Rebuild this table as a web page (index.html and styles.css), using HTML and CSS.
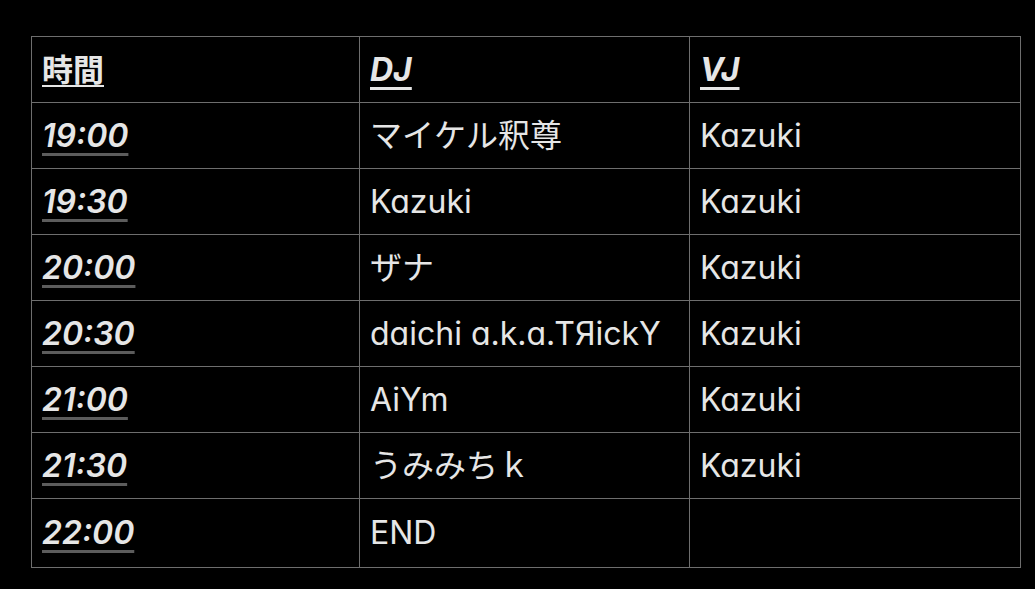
FILE: index.html
```html
<!DOCTYPE html>
<html lang="ja">
<head>
<meta charset="utf-8">
<link rel="stylesheet" href="styles.css">
</head>
<body>
<table class="schedule">
  <colgroup>
    <col class="c1"><col class="c2"><col class="c3">
  </colgroup>
  <thead>
    <tr><th><span class="h-time">時間</span></th><th><span class="h-it">DJ</span></th><th><span class="h-it">VJ</span></th></tr>
  </thead>
  <tbody>
    <tr><td><span class="time">19:00</span></td><td>マイケル釈尊</td><td>Kazuki</td></tr>
    <tr><td><span class="time">19:30</span></td><td>Kazuki</td><td>Kazuki</td></tr>
    <tr><td><span class="time">20:00</span></td><td>ザナ</td><td>Kazuki</td></tr>
    <tr><td><span class="time">20:30</span></td><td>daichi a.k.a.TЯickY</td><td>Kazuki</td></tr>
    <tr><td><span class="time">21:00</span></td><td>AiYm</td><td>Kazuki</td></tr>
    <tr><td><span class="time">21:30</span></td><td>うみみちｋ</td><td>Kazuki</td></tr>
    <tr class="last"><td><span class="time">22:00</span></td><td>END</td><td></td></tr>
  </tbody>
</table>
</body>
</html>
```
FILE: styles.css
```css
html, body {
  margin: 0;
  background: #000;
}
body {
  padding: 36px 0 0 31px;
  font-family: Inter, "Noto Sans CJK JP", sans-serif;
  font-feature-settings: "cv11" 1;
  color: #e6e6e6;
}
.schedule {
  border-collapse: collapse;
  width: 989px;
  table-layout: fixed;
  font-size: 32px;
}
.c1 { width: 328px; }
.c2 { width: 330px; }
.c3 { width: 331px; }
.schedule th, .schedule td {
  border: 1px solid #6e6e6e;
  height: 66px;
  padding: 0 10px;
  text-align: left;
  vertical-align: middle;
  font-weight: 400;
  white-space: nowrap;
  line-height: 1;
  box-sizing: border-box;
}
.schedule tr.last td { height: 69px; }
.h-time {
  font-size: 31px;
  font-weight: 700;
  text-decoration: underline;
  text-decoration-thickness: 2px;
  text-underline-offset: 4px;
}
.h-it {
  font-weight: 700;
  font-style: italic;
  text-decoration: underline;
  text-decoration-thickness: 3px;
  text-underline-offset: 6px;
}
.time {
  font-weight: 600;
  font-style: italic;
  text-decoration: underline;
  text-decoration-color: #5c5c5c;
  text-decoration-thickness: 3px;
  text-underline-offset: 6px;
}
```
